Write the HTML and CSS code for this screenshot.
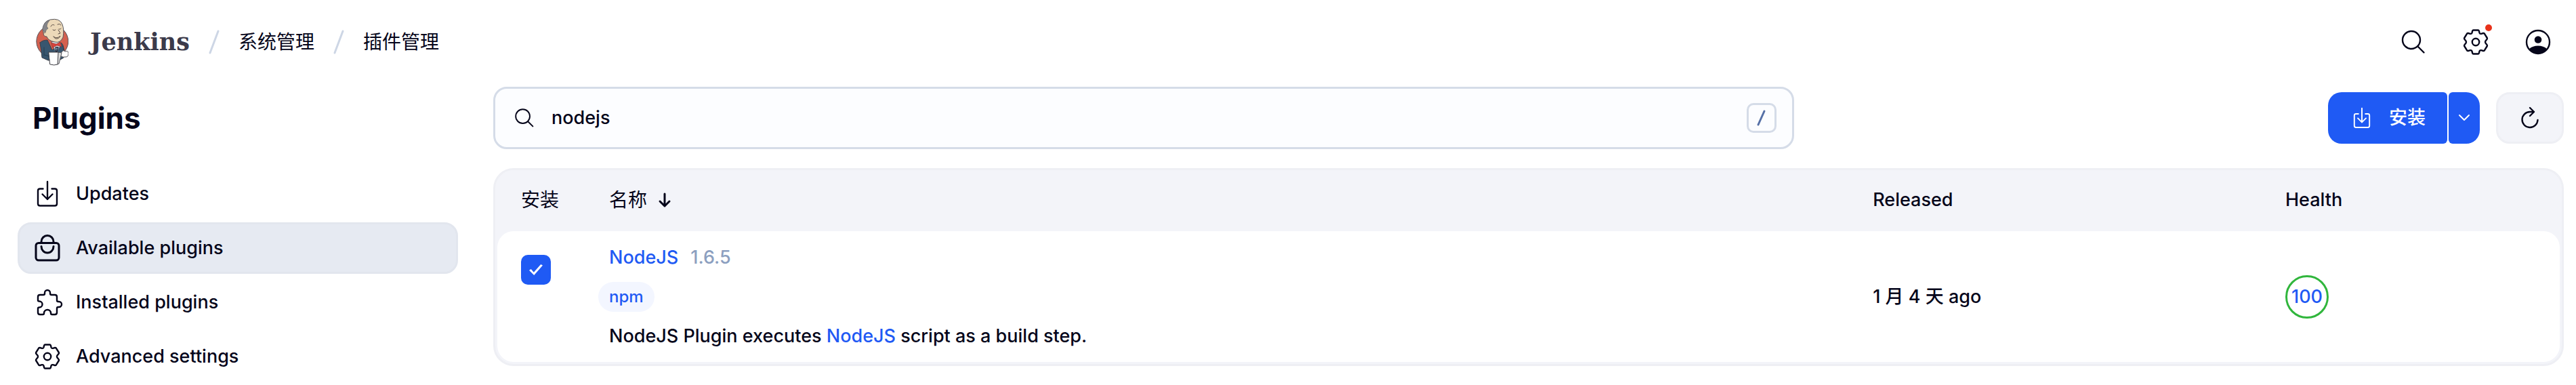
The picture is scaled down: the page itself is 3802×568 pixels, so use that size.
FILE: index.html
```
<!DOCTYPE html>
<html lang="zh-CN">
<head>
  <meta charset="UTF-8" />
  <meta name="viewport" content="width=device-width, initial-scale=1.0"/>
  <title>Available plugins - Plugins - Jenkins</title>
  <link rel="stylesheet" href="styles.css">
</head>
<body>
  <!-- shared icons -->
  <svg class="sprite" aria-hidden="true">
    <symbol id="icon-settings" viewBox="-20 -20 40 40">
      <path d="M-3.5-17.5H3.5Q4.5-17.5 4.8-16.5L5.6-13.4Q6.2-11.8 8-12.2L11-13Q12.3-13.2 13-12.2L16.8-6Q17.3-4.8 16.5-4L14.6-1.8Q13.4 0 14.6 1.8L16.5 4Q17.3 4.8 16.8 6L13 12.2Q12.3 13.2 11 13L8 12.2Q6.2 11.8 5.6 13.4L4.8 16.5Q4.5 17.5 3.5 17.5H-3.5Q-4.5 17.5-4.8 16.5L-5.6 13.4Q-6.2 11.8-8 12.2L-11 13Q-12.3 13.2-13 12.2L-16.8 6Q-17.3 4.8-16.5 4L-14.6 1.8Q-13.4 0-14.6-1.8L-16.5-4Q-17.3-4.8-16.8-6L-13-12.2Q-12.3-13.2-11-13L-8-12.2Q-6.2-11.8-5.6-13.4L-4.8-16.5Q-4.5-17.5-3.5-17.5Z"/>
      <circle r="5.2"/>
    </symbol>
    <symbol id="icon-download" viewBox="0 0 40 40">
      <path d="M13.500 12.500H9Q6 12.500 6 15.500V34.500Q6 37.500 9 37.500H31Q34 37.500 34 34.500V15.500Q34 12.500 31 12.500H26.500M20 2V28M12.500 20.500L20 28L27.500 20.500"/>
    </symbol>
    <symbol id="icon-search" viewBox="0 0 40 40">
      <circle cx="17" cy="17" r="13"/>
      <path d="M26.500 26.500L35.500 35.500"/>
    </symbol>
  </svg>

  <header class="header">
    <a class="brand" href="#">
      <svg class="brand-logo" viewBox="0 0 48 70" aria-hidden="true">
        <circle cx="24.300" cy="34" r="23.500" fill="#d3604f" stroke="#56565c"/>
        <path d="M6 36Q10 32 17 32L24 47L37 36Q41 38 41 48V58Q36 62 31 62H18L9 58Q8 48 6 36Z" fill="#38566f" stroke="#3c4048"/>
        <path d="M23 35L30 51L37 39L33 34Z" fill="#dfe9f0" stroke="#56565c" stroke-width=".6"/>
        <path d="M29 43L30 51L33 43Z" fill="#7698ae"/>
        <path d="M14 21Q9 23 11 17Q10 5 21 2Q35-1 39 9Q42 17 40 28Q36 37 28 35Q18 33 16 27Q11 27 11 22" fill="#ecd9b9" stroke="#56565c"/>
        <path d="M14 20Q9 20 10 14Q12 5 20 3Q16 8 16 12L18 15Q15 16 14 20Z" fill="#85858a" stroke="#56565c" stroke-width=".6"/>
        <path d="M22 12Q24 8 27 10M32 9Q35 7 37 10M25 17Q27 19 29 17M34 16Q36 17 37 15M33 17L36 22L33 23M26 27Q31 31 36 26Q34 31 29 30Z" fill="none" stroke="#5d5048"/>
        <path d="M23 36L30 38L36 35L38 42L31 40L25 43Z" fill="#d9423c" stroke="#8d3531" stroke-width=".7"/>
        <path d="M38 50Q40 46 43 49Q48 47 48 52Q48 57 44 57Q40 58 37 56Z" fill="#fff" stroke="#56565c"/>
        <path d="M32 50L38 51L34 67L31 68Z" fill="#dcdcdc" stroke="#56565c"/>
        <path d="M19 50H33L32 68Q27 70 21 68Z" fill="#fff" stroke="#3c3c42"/>
        <path d="M12 43V55M40 41L42 48M13 54L19 56" fill="none" stroke="#263e51"/>
      </svg>
      <span class="brand-name">Jenkins</span>
    </a>
    <nav class="breadcrumbs" aria-label="Breadcrumbs">
      <svg class="separator" viewBox="0 0 16 36" aria-hidden="true"><path d="M2 34L14 2"/></svg>
      <a href="#">系统管理</a>
      <svg class="separator" viewBox="0 0 16 36" aria-hidden="true"><path d="M2 34L14 2"/></svg>
      <a href="#">插件管理</a>
    </nav>
    <div class="header-actions">
      <button type="button" aria-label="Search"><svg class="icon"><use href="#icon-search"/></svg></button>
      <button type="button" aria-label="Manage Jenkins">
        <svg class="icon"><use href="#icon-settings"/></svg>
        <span class="alert-dot"></span>
      </button>
      <button type="button" aria-label="User">
        <svg class="icon" viewBox="0 0 40 40">
          <circle cx="20" cy="20" r="17"/>
          <circle class="solid" cx="20" cy="16.500" r="5.300"/>
          <path class="solid" d="M7 30Q12 25.500 20 25.500T33 30Q28 37 20 37T7 30Z"/>
        </svg>
      </button>
    </div>
  </header>

  <div class="page">
    <aside class="sidebar">
      <h1>Plugins</h1>
      <nav class="tasks">
        <a href="#"><svg class="icon"><use href="#icon-download"/></svg>Updates</a>
        <a href="#" class="active">
          <svg class="icon" viewBox="0 0 40 40">
            <g class="heavy">
              <rect x="3" y="12.500" width="34" height="25.500" rx="4"/>
              <path d="M11 12V10.500A9 9 0 0 1 29 10.500V12M11 17.500A9 9.500 0 0 0 29 17.500"/>
            </g>
          </svg>Available plugins
        </a>
        <a href="#">
          <svg class="icon" viewBox="0 0 40 40">
            <path d="M6 12Q6 9 9 9H14Q16 9 16 7V6A4 4 0 0 1 24 6V7Q24 9 26 9H31Q34 9 34 12V17Q34 19 36 19H37A4 4 0 0 1 37 27H36Q34 27 34 29V35Q34 38 31 38H27Q25 38 25 36A5 5 0 0 0 15 36Q15 38 13 38H9Q6 38 6 35V29Q6 27.500 8 27.500A4.500 4.500 0 0 0 8 18.500Q6 18.500 6 17Z"/>
          </svg>Installed plugins
        </a>
        <a href="#"><svg class="icon"><use href="#icon-settings"/></svg>Advanced settings</a>
      </nav>
    </aside>

    <main class="main">
      <div class="app-bar">
        <label class="search">
          <svg class="icon icon-small"><use href="#icon-search"/></svg>
          <input type="text" value="nodejs" aria-label="Search available plugins">
          <kbd><svg viewBox="0 0 16 24" aria-label="/"><path d="M3 22L12 2"/></svg></kbd>
        </label>
        <div class="controls">
          <div class="split-button">
            <button type="button" class="install">
              <svg class="icon icon-small"><use href="#icon-download"/></svg>安装
            </button>
            <button type="button" class="more" aria-label="More">
              <svg class="chevron" viewBox="0 0 20 12"><path d="M3 2L10 9L17 2"/></svg>
            </button>
          </div>
          <button type="button" class="refresh" aria-label="Refresh">
            <svg class="icon icon-small" viewBox="0 0 32 32">
              <path d="M27.500 19A11.500 11.500 0 1 1 16 7H22M16 1L22 7L16 13"/>
            </svg>
          </button>
        </div>
      </div>

      <div class="table-wrap">
        <table class="plugins">
          <thead>
            <tr>
              <th class="col-install">安装</th>
              <th class="col-name">名称<svg class="sort" viewBox="0 0 20 24" aria-hidden="true"><path d="M10 3V21M3 14L10 21L17 14"/></svg></th>
              <th class="col-released">Released</th>
              <th class="col-health">Health</th>
            </tr>
          </thead>
          <tbody>
            <tr>
              <td class="cell-check"><input type="checkbox" checked aria-label="NodeJS"></td>
              <td>
                <div class="plugin-name"><a href="#">NodeJS</a><span class="version">1.6.5</span></div>
                <a class="badge" href="#">npm</a>
                <div class="excerpt">NodeJS Plugin executes <a href="#">NodeJS</a> script as a build step.</div>
              </td>
              <td>1 月 4 天 ago</td>
              <td><a class="health" href="#">100</a></td>
            </tr>
          </tbody>
        </table>
      </div>
    </main>
  </div>
</body>
</html>
```
FILE: styles.css
```
* {
  box-sizing: border-box;
}

body {
  margin: 0;
  font-family: Inter, "Noto Sans CJK SC", sans-serif;
  font-size: 27px;
  font-weight: 450;
  line-height: 40px;
  color: #05051a;
  background: #fff;
}

a {
  color: inherit;
  text-decoration: none;
}

button {
  font: inherit;
  color: inherit;
  border: none;
  background: none;
  padding: 0;
  cursor: pointer;
}

svg {
  display: block;
  flex-shrink: 0;
  fill: none;
  stroke: currentColor;
  stroke-width: 3;
  stroke-linecap: round;
  stroke-linejoin: round;
}

.sprite {
  position: absolute;
  width: 0;
  height: 0;
}

.icon {
  width: 40px;
  height: 40px;
  stroke-width: 2.4;
  overflow: visible;
}

.icon-small {
  width: 32px;
  height: 32px;
}

.solid {
  fill: currentColor;
  stroke: none;
}

.heavy {
  stroke-width: 3;
}

/* header */
.header {
  display: flex;
  align-items: center;
  height: 124px;
  padding: 0 36px 0 53px;
}

.brand {
  display: flex;
  align-items: center;
  gap: 32px;
}

.brand-logo {
  width: 48px;
  height: 70px;
  stroke-width: 1;
}

.brand-name {
  font-family: "DejaVu Serif", serif;
  font-size: 35px;
  font-weight: bold;
  color: #3b3a4a;
}

.breadcrumbs {
  display: flex;
  align-items: center;
  gap: 28px;
  margin-left: 28px;
  font-size: 28px;
  font-weight: 400;
}

.separator {
  width: 16px;
  height: 36px;
  color: #cdd6e5;
}

.header-actions {
  display: flex;
  gap: 52px;
  margin-left: auto;
}

.header-actions button {
  position: relative;
}

.alert-dot {
  position: absolute;
  top: -6px;
  right: -4px;
  width: 10px;
  height: 10px;
  border-radius: 50%;
  background: #e8321a;
}

/* layout */
.page {
  display: flex;
  gap: 52px;
  padding: 4px 18px 4px 26px;
}

.sidebar {
  width: 650px;
  flex-shrink: 0;
}

h1 {
  margin: 0 0 28px 22px;
  font-size: 44px;
  font-weight: 700;
  line-height: 92px;
}

.tasks {
  display: flex;
  flex-direction: column;
  gap: 4px;
}

.tasks a {
  display: flex;
  align-items: center;
  gap: 22px;
  height: 76px;
  padding: 0 24px;
  border-radius: 20px;
}

.tasks .active {
  background: #e6eaf2;
  border: 3px solid #e2e6ee;
  padding: 0 21px;
}

.main {
  flex: 1;
  min-width: 0;
}

/* search and buttons */
.app-bar {
  display: flex;
  align-items: center;
  justify-content: space-between;
  gap: 24px;
  margin-bottom: 28px;
}

.search {
  display: flex;
  align-items: center;
  flex: 1;
  max-width: 1920px;
  height: 92px;
  padding: 0 23px 0 27px;
  border: 3px solid #d5dce8;
  border-radius: 20px;
  background: #fcfdff;
}

.search input {
  flex: 1;
  min-width: 0;
  padding: 0;
  margin: 0 24px;
  border: none;
  outline: none;
  background: none;
  font: inherit;
  color: inherit;
}

kbd {
  display: flex;
  align-items: center;
  justify-content: center;
  width: 44px;
  height: 44px;
  border: 3px solid #d5dce8;
  border-radius: 10px;
  color: #5670a6;
}

kbd svg {
  width: 16px;
  height: 24px;
}

.controls {
  display: flex;
  gap: 24px;
}

.split-button {
  display: flex;
  gap: 2px;
  color: #fff;
  font-weight: 500;
}

.install {
  display: flex;
  align-items: center;
  gap: 24px;
  height: 76px;
  padding: 0 32px 0 34px;
  border-radius: 20px 6px 6px 20px;
  background: #1f5af4;
}

.more {
  display: flex;
  align-items: center;
  justify-content: center;
  width: 46px;
  border-radius: 6px 20px 20px 6px;
  background: #1f5af4;
}

.chevron {
  width: 20px;
  height: 12px;
  stroke-width: 2;
}

.refresh {
  display: flex;
  align-items: center;
  justify-content: center;
  width: 100px;
  border: 3px solid #eeeff4;
  border-radius: 20px;
  background: #f3f4f9;
}

/* plugin table */
.table-wrap {
  padding: 3px;
  border: 3px solid #eeeff4;
  border-radius: 30px;
  background: #f3f4f9;
}

.plugins {
  width: 100%;
  table-layout: fixed;
  border-collapse: separate;
  border-spacing: 0;
  text-align: left;
}

.plugins th {
  height: 87px;
  padding: 0 35px 6px;
  font-weight: 500;
}

.plugins .col-install,
.plugins .col-name {
  font-size: 28px;
  font-weight: 400;
}

.plugins td {
  height: 193px;
  padding: 0 35px;
  background: #fff;
}

.plugins td:first-child {
  border-radius: 24px 0 0 24px;
}

.plugins td:last-child {
  border-radius: 0 24px 24px 0;
}

.col-install {
  width: 130px;
}

.col-released {
  width: 20%;
}

.col-health {
  width: 440px;
}

.sort {
  display: inline-block;
  width: 20px;
  height: 24px;
  margin-left: 16px;
  vertical-align: -2px;
}

.plugins .cell-check {
  padding-top: 35px;
  vertical-align: top;
}

.cell-check input {
  appearance: none;
  display: flex;
  align-items: center;
  justify-content: center;
  width: 44px;
  height: 44px;
  margin: 0;
  border-radius: 10px;
  background: #1f5af4;
}

/* tick */
.cell-check input::before {
  content: "";
  width: 20px;
  height: 16px;
  background: #fff;
  clip-path: polygon(0 54%, 14% 44%, 34% 74%, 86% 0, 100% 10%, 36% 100%);
}

.plugins td a {
  color: #1f5af4;
}

.version {
  margin-left: 18px;
  color: #8c9fc0;
}

.plugins .badge {
  display: inline-block;
  margin: 16px 0 16px -16px;
  padding: 0 16px;
  border-radius: 22px;
  background: #f3f6ff;
  font-size: 24px;
  line-height: 44px;
  vertical-align: top;
}

.excerpt a {
  font-weight: 500;
}

.health {
  display: flex;
  align-items: center;
  justify-content: center;
  width: 64px;
  height: 64px;
  border: 3px solid #30b63c;
  border-radius: 50%;
  font-weight: 500;
}
```
